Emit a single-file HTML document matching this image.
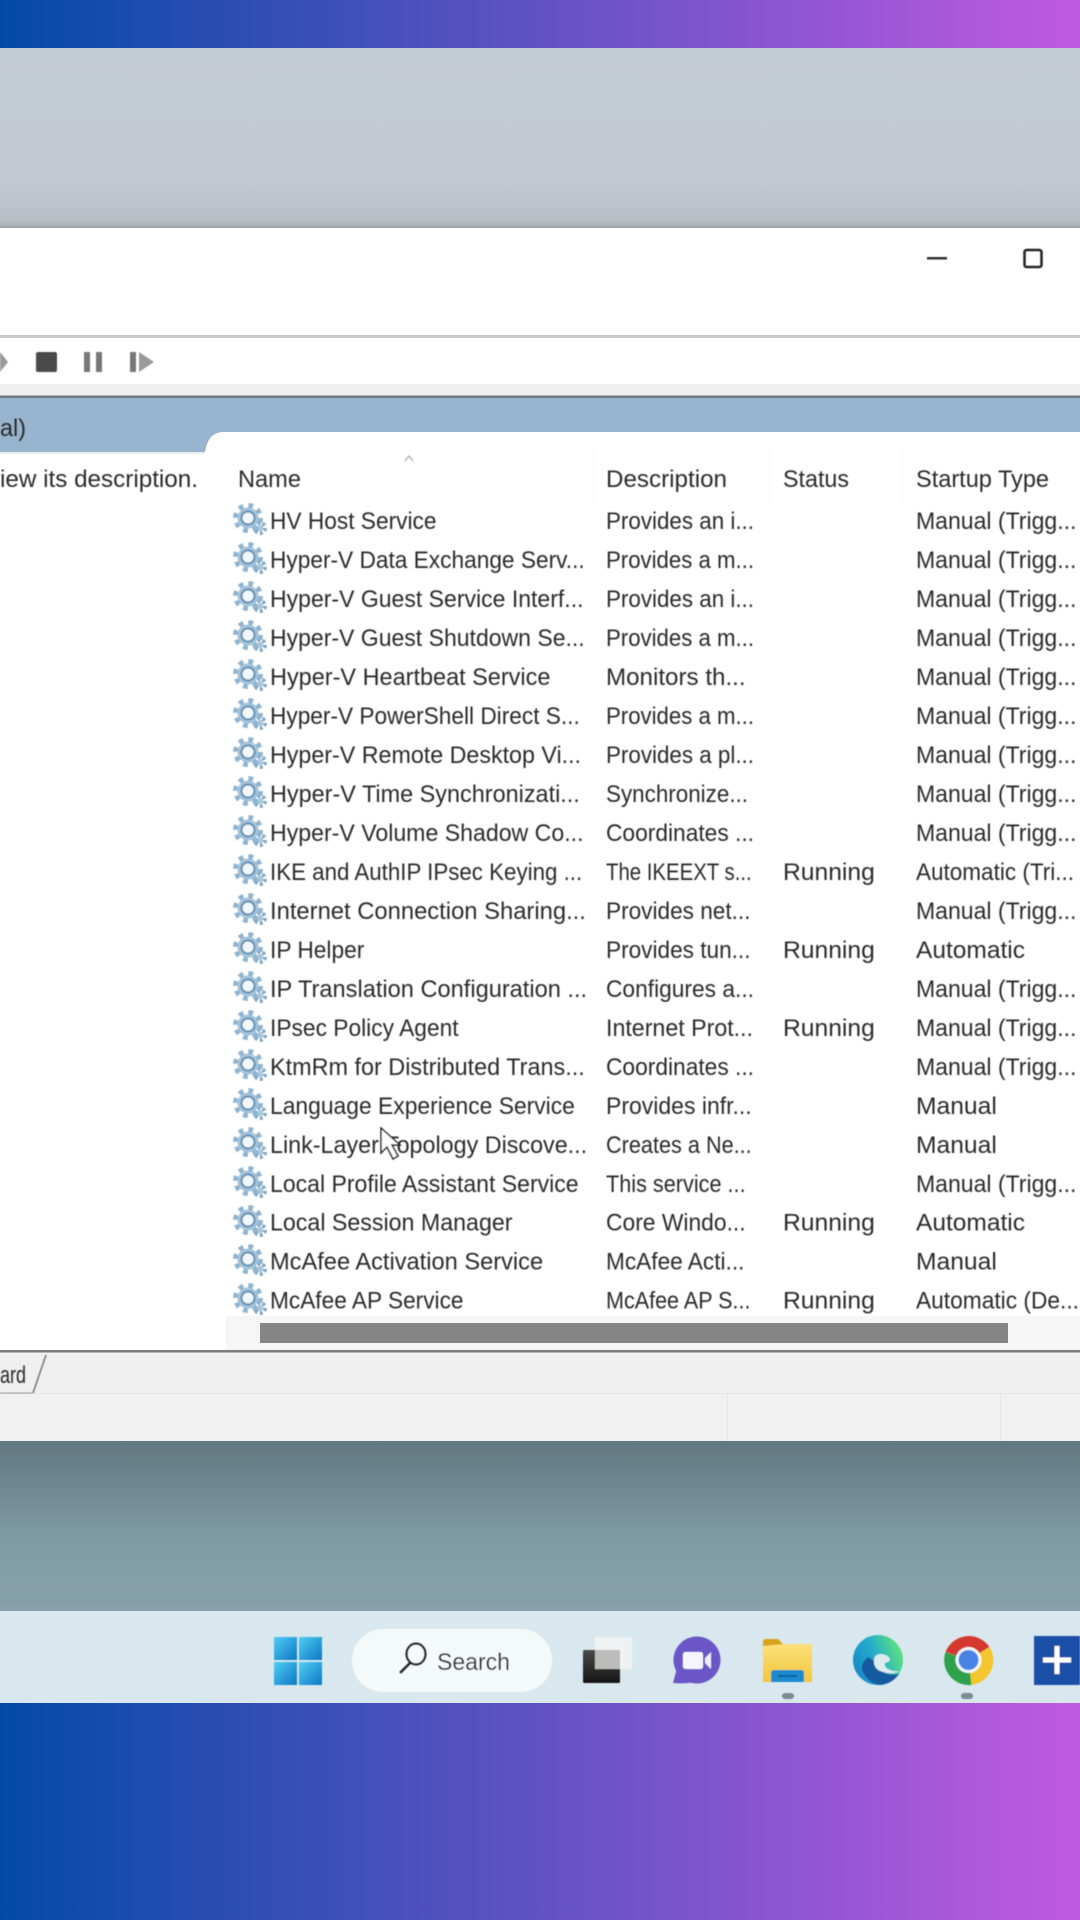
<!DOCTYPE html>
<html><head><meta charset="utf-8"><style>
html,body{margin:0;padding:0;width:1080px;height:1920px;overflow:hidden;background:#fff}
svg{display:block}
text{font-family:"Liberation Sans",sans-serif;font-size:24px;fill:#2c2c2c}
</style></head><body>
<svg width="1080" height="1920" viewBox="0 0 1080 1920" xmlns="http://www.w3.org/2000/svg">
<defs>
<linearGradient id="brand" x1="0" x2="1" y1="0" y2="0"><stop offset="0" stop-color="#034aa8"/><stop offset="1" stop-color="#c05ae0"/></linearGradient>
<linearGradient id="sky" x1="0" x2="0" y1="0" y2="1"><stop offset="0" stop-color="#c3cbd5"/><stop offset=".75" stop-color="#c1c8d2"/><stop offset=".95" stop-color="#b8bfc6"/><stop offset="1" stop-color="#abb2b5"/></linearGradient>
<linearGradient id="desk" x1="0" x2="0" y1="0" y2="1"><stop offset="0" stop-color="#617880"/><stop offset=".6" stop-color="#7f9ca6"/><stop offset="1" stop-color="#86a1ab"/></linearGradient>
<linearGradient id="win" x1="0" x2="1" y1="0" y2="1"><stop offset="0" stop-color="#4fcdf5"/><stop offset="1" stop-color="#0d78c4"/></linearGradient>
<linearGradient id="edge" x1="0" x2="1" y1=".7" y2=".3"><stop offset="0" stop-color="#1a86cc"/><stop offset=".5" stop-color="#25b0c8"/><stop offset="1" stop-color="#63e578"/></linearGradient>
<linearGradient id="task" x1="0" x2="0" y1="0" y2="1"><stop offset="0" stop-color="#4a4a4a"/><stop offset="1" stop-color="#151515"/></linearGradient>
<linearGradient id="fold" x1="0" x2="0" y1="0" y2="1"><stop offset="0" stop-color="#fbe07a"/><stop offset="1" stop-color="#f4c63e"/></linearGradient>
<filter id="b" x="-2%" y="-2%" width="104%" height="104%"><feGaussianBlur stdDeviation="0.6"/></filter>
<g id="gear">
<circle cx="27" cy="25" r="5" fill="none" stroke="#7ea6c6" stroke-width="4" stroke-dasharray="2.8 2.4"/>
<circle cx="27" cy="25" r="3" fill="#a9c6dc"/>
<circle cx="15" cy="15" r="12" fill="none" stroke="#8fb4d0" stroke-width="6" stroke-dasharray="4.6 4.82"/>
<circle cx="15" cy="15" r="10.500" fill="#a4c2d8"/>
<circle cx="15" cy="15" r="6.500" fill="#f2f7fb" stroke="#5f8fb4" stroke-width="2"/>
</g>
</defs>

<rect width="1080" height="1920" fill="#fff"/>
<rect y="0" width="1080" height="48" fill="url(#brand)"/>
<rect y="48" width="1080" height="180" fill="url(#sky)"/>
<rect y="226" width="1080" height="1.5" fill="#9ea4a6"/>

<rect y="228" width="1080" height="108" fill="#fff"/>
<rect y="335" width="1080" height="3" fill="#c9c9c9"/>
<rect y="338" width="1080" height="46" fill="#fff"/>
<rect y="384" width="1080" height="12" fill="#efefef"/>
<rect y="395.500" width="1080" height="2.500" fill="#74797e"/>

<path d="M0 398H1080V432H222Q208 433 205 452H0Z" fill="#98b4cf"/>
<rect y="452" width="205" height="2" fill="#e6eef5"/>

<rect x="226" y="1316" width="854" height="34" fill="#f6f6f6"/>
<rect x="260" y="1323" width="748" height="20" fill="#858585"/>
<rect y="1350" width="1080" height="2.500" fill="#7a7a7a"/>
<rect y="1352.500" width="1080" height="41" fill="#f0f0f0"/>
<rect y="1393" width="1080" height="1" fill="#e6e6e6"/>
<rect y="1394" width="1080" height="47" fill="#f1f1f1"/>
<rect x="727" y="1394" width="1" height="47" fill="#e6e6e6"/>
<rect x="1000" y="1394" width="1" height="47" fill="#e6e6e6"/>

<rect y="1441" width="1080" height="170" fill="url(#desk)"/>
<rect y="1611" width="1080" height="92" fill="#d9e8ee"/>
<rect y="1703" width="1080" height="217" fill="url(#brand)"/>

<g filter="url(#b)">
<rect x="927" y="257" width="20" height="2.500" fill="#333"/>
<rect x="1024.500" y="250" width="17" height="17" rx="2" fill="none" stroke="#222" stroke-width="2.500"/>

<path d="M0 352L8 362L0 372Z" fill="#9a9a9a"/>
<rect x="36" y="352" width="21" height="20" rx="2" fill="#484848"/>
<rect x="84" y="352" width="6" height="20" fill="#777"/>
<rect x="96" y="352" width="6" height="20" fill="#777"/>
<rect x="130" y="352" width="6" height="20" fill="#777"/>
<path d="M139 352L154 362L139 372Z" fill="#999"/>

<text x="0" y="436" textLength="26" lengthAdjust="spacingAndGlyphs">al)</text>
<text x="0" y="487" textLength="198" lengthAdjust="spacingAndGlyphs">iew its description.</text>

<text x="238" y="487" textLength="63" lengthAdjust="spacingAndGlyphs">Name</text>
<text x="606" y="487" textLength="121" lengthAdjust="spacingAndGlyphs">Description</text>
<text x="783" y="487" textLength="66" lengthAdjust="spacingAndGlyphs">Status</text>
<text x="916" y="487" textLength="133" lengthAdjust="spacingAndGlyphs">Startup Type</text>
<path d="M405 461L409 456L413 461" fill="none" stroke="#aaa" stroke-width="1.300"/>
<rect x="593" y="450" width="1" height="50" fill="#f6f6f6"/>
<rect x="769" y="450" width="1" height="50" fill="#f6f6f6"/>
<rect x="902" y="450" width="1" height="50" fill="#f6f6f6"/>

<use href="#gear" x="233" y="503"/><use href="#gear" x="233" y="542"/><use href="#gear" x="233" y="581"/><use href="#gear" x="233" y="620"/><use href="#gear" x="233" y="659"/><use href="#gear" x="233" y="698"/><use href="#gear" x="233" y="737"/><use href="#gear" x="233" y="776"/><use href="#gear" x="233" y="815"/><use href="#gear" x="233" y="854"/><use href="#gear" x="233" y="893"/><use href="#gear" x="233" y="932"/><use href="#gear" x="233" y="971"/><use href="#gear" x="233" y="1010"/><use href="#gear" x="233" y="1049"/><use href="#gear" x="233" y="1088"/><use href="#gear" x="233" y="1127"/><use href="#gear" x="233" y="1166"/><use href="#gear" x="233" y="1205"/><use href="#gear" x="233" y="1244"/><use href="#gear" x="233" y="1283"/>

<g>
<text x="270" y="529" textLength="166.500" lengthAdjust="spacingAndGlyphs">HV Host Service</text>
<text x="270" y="568" textLength="314.700" lengthAdjust="spacingAndGlyphs">Hyper-V Data Exchange Serv...</text>
<text x="270" y="607" textLength="313.500" lengthAdjust="spacingAndGlyphs">Hyper-V Guest Service Interf...</text>
<text x="270" y="646" textLength="314.700" lengthAdjust="spacingAndGlyphs">Hyper-V Guest Shutdown Se...</text>
<text x="270" y="685" textLength="280.400" lengthAdjust="spacingAndGlyphs">Hyper-V Heartbeat Service</text>
<text x="270" y="724" textLength="309.800" lengthAdjust="spacingAndGlyphs">Hyper-V PowerShell Direct S...</text>
<text x="270" y="763" textLength="311" lengthAdjust="spacingAndGlyphs">Hyper-V Remote Desktop Vi...</text>
<text x="270" y="802" textLength="309.800" lengthAdjust="spacingAndGlyphs">Hyper-V Time Synchronizati...</text>
<text x="270" y="841" textLength="313.500" lengthAdjust="spacingAndGlyphs">Hyper-V Volume Shadow Co...</text>
<text x="270" y="880" textLength="312.200" lengthAdjust="spacingAndGlyphs">IKE and AuthIP IPsec Keying ...</text>
<text x="270" y="919" textLength="315.900" lengthAdjust="spacingAndGlyphs">Internet Connection Sharing...</text>
<text x="270" y="958" textLength="94.300" lengthAdjust="spacingAndGlyphs">IP Helper</text>
<text x="270" y="997" textLength="317.100" lengthAdjust="spacingAndGlyphs">IP Translation Configuration ...</text>
<text x="270" y="1036" textLength="188.600" lengthAdjust="spacingAndGlyphs">IPsec Policy Agent</text>
<text x="270" y="1075" textLength="314.700" lengthAdjust="spacingAndGlyphs">KtmRm for Distributed Trans...</text>
<text x="270" y="1114" textLength="304.900" lengthAdjust="spacingAndGlyphs">Language Experience Service</text>
<text x="270" y="1153" textLength="317.100" lengthAdjust="spacingAndGlyphs">Link-Layer Topology Discove...</text>
<text x="270" y="1192" textLength="308.600" lengthAdjust="spacingAndGlyphs">Local Profile Assistant Service</text>
<text x="270" y="1230.500" textLength="242.500" lengthAdjust="spacingAndGlyphs">Local Session Manager</text>
<text x="270" y="1269.500" textLength="273.100" lengthAdjust="spacingAndGlyphs">McAfee Activation Service</text>
<text x="270" y="1308.500" textLength="193.500" lengthAdjust="spacingAndGlyphs">McAfee AP Service</text>

<text x="606" y="529" textLength="148" lengthAdjust="spacingAndGlyphs">Provides an i...</text>
<text x="606" y="568" textLength="148" lengthAdjust="spacingAndGlyphs">Provides a m...</text>
<text x="606" y="607" textLength="148" lengthAdjust="spacingAndGlyphs">Provides an i...</text>
<text x="606" y="646" textLength="148" lengthAdjust="spacingAndGlyphs">Provides a m...</text>
<text x="606" y="685" textLength="139.600" lengthAdjust="spacingAndGlyphs">Monitors th...</text>
<text x="606" y="724" textLength="148" lengthAdjust="spacingAndGlyphs">Provides a m...</text>
<text x="606" y="763" textLength="148" lengthAdjust="spacingAndGlyphs">Provides a pl...</text>
<text x="606" y="802" textLength="142" lengthAdjust="spacingAndGlyphs">Synchronize...</text>
<text x="606" y="841" textLength="148" lengthAdjust="spacingAndGlyphs">Coordinates ...</text>
<text x="606" y="880" textLength="145.700" lengthAdjust="spacingAndGlyphs">The IKEEXT s...</text>
<text x="606" y="919" textLength="144.500" lengthAdjust="spacingAndGlyphs">Provides net...</text>
<text x="606" y="958" textLength="144.500" lengthAdjust="spacingAndGlyphs">Provides tun...</text>
<text x="606" y="997" textLength="148" lengthAdjust="spacingAndGlyphs">Configures a...</text>
<text x="606" y="1036" textLength="147" lengthAdjust="spacingAndGlyphs">Internet Prot...</text>
<text x="606" y="1075" textLength="148" lengthAdjust="spacingAndGlyphs">Coordinates ...</text>
<text x="606" y="1114" textLength="145.700" lengthAdjust="spacingAndGlyphs">Provides infr...</text>
<text x="606" y="1153" textLength="145.700" lengthAdjust="spacingAndGlyphs">Creates a Ne...</text>
<text x="606" y="1192" textLength="139.600" lengthAdjust="spacingAndGlyphs">This service ...</text>
<text x="606" y="1230.500" textLength="139.600" lengthAdjust="spacingAndGlyphs">Core Windo...</text>
<text x="606" y="1269.500" textLength="138.400" lengthAdjust="spacingAndGlyphs">McAfee Acti...</text>
<text x="606" y="1308.500" textLength="144.500" lengthAdjust="spacingAndGlyphs">McAfee AP S...</text>

<text x="783" y="880" textLength="91.800" lengthAdjust="spacingAndGlyphs">Running</text>
<text x="783" y="958" textLength="91.800" lengthAdjust="spacingAndGlyphs">Running</text>
<text x="783" y="1036" textLength="91.800" lengthAdjust="spacingAndGlyphs">Running</text>
<text x="783" y="1230.500" textLength="91.800" lengthAdjust="spacingAndGlyphs">Running</text>
<text x="783" y="1308.500" textLength="91.800" lengthAdjust="spacingAndGlyphs">Running</text>

<text x="916" y="529" textLength="160.400" lengthAdjust="spacingAndGlyphs">Manual (Trigg...</text>
<text x="916" y="568" textLength="160.400" lengthAdjust="spacingAndGlyphs">Manual (Trigg...</text>
<text x="916" y="607" textLength="160.400" lengthAdjust="spacingAndGlyphs">Manual (Trigg...</text>
<text x="916" y="646" textLength="160.400" lengthAdjust="spacingAndGlyphs">Manual (Trigg...</text>
<text x="916" y="685" textLength="160.400" lengthAdjust="spacingAndGlyphs">Manual (Trigg...</text>
<text x="916" y="724" textLength="160.400" lengthAdjust="spacingAndGlyphs">Manual (Trigg...</text>
<text x="916" y="763" textLength="160.400" lengthAdjust="spacingAndGlyphs">Manual (Trigg...</text>
<text x="916" y="802" textLength="160.400" lengthAdjust="spacingAndGlyphs">Manual (Trigg...</text>
<text x="916" y="841" textLength="160.400" lengthAdjust="spacingAndGlyphs">Manual (Trigg...</text>
<text x="916" y="880" textLength="158" lengthAdjust="spacingAndGlyphs">Automatic (Tri...</text>
<text x="916" y="919" textLength="160.400" lengthAdjust="spacingAndGlyphs">Manual (Trigg...</text>
<text x="916" y="958" textLength="109" lengthAdjust="spacingAndGlyphs">Automatic</text>
<text x="916" y="997" textLength="160.400" lengthAdjust="spacingAndGlyphs">Manual (Trigg...</text>
<text x="916" y="1036" textLength="160.400" lengthAdjust="spacingAndGlyphs">Manual (Trigg...</text>
<text x="916" y="1075" textLength="160.400" lengthAdjust="spacingAndGlyphs">Manual (Trigg...</text>
<text x="916" y="1114" textLength="80.800" lengthAdjust="spacingAndGlyphs">Manual</text>
<text x="916" y="1153" textLength="80.800" lengthAdjust="spacingAndGlyphs">Manual</text>
<text x="916" y="1192" textLength="160.400" lengthAdjust="spacingAndGlyphs">Manual (Trigg...</text>
<text x="916" y="1230.500" textLength="109" lengthAdjust="spacingAndGlyphs">Automatic</text>
<text x="916" y="1269.500" textLength="80.800" lengthAdjust="spacingAndGlyphs">Manual</text>
<text x="916" y="1308.500" textLength="163" lengthAdjust="spacingAndGlyphs">Automatic (De...</text>
</g>

<path d="M381 1128L381 1153L387 1147L393 1159L398 1156L392 1145L400 1145Z" fill="#fff" stroke="#222" stroke-width="1.500"/>

<text x="0" y="1383" textLength="26" lengthAdjust="spacingAndGlyphs">ard</text>
<path d="M46 1355L33 1393" stroke="#777" stroke-width="1.500"/>
<path d="M0 1393H33" stroke="#999" stroke-width="1"/>

<rect x="274" y="1637" width="23" height="23" fill="url(#win)"/>
<rect x="299" y="1637" width="23" height="23" fill="url(#win)"/>
<rect x="274" y="1662" width="23" height="23" fill="url(#win)"/>
<rect x="299" y="1662" width="23" height="23" fill="url(#win)"/>

<rect x="352" y="1629" width="200" height="63" rx="31" fill="#f4f9fa"/>
<ellipse cx="416" cy="1654" rx="9.500" ry="10.500" fill="none" stroke="#222" stroke-width="2.500"/>
<path d="M410 1663L400 1673" stroke="#222" stroke-width="3"/>
<text x="437" y="1670" textLength="73" lengthAdjust="spacingAndGlyphs">Search</text>

<rect x="583" y="1650" width="37" height="33" rx="1.500" fill="url(#task)"/>
<rect x="595" y="1637" width="37" height="32" fill="#eff2f3"/>
<rect x="595" y="1650" width="25" height="19" fill="#bcbcba"/>

<circle cx="697" cy="1660" r="23.500" fill="#6a56c6"/>
<path d="M677 1668L673 1683Q686 1684 694 1682Z" fill="#6a56c6"/>
<rect x="683" y="1652" width="20" height="17" rx="2.500" fill="#f6f4fc"/>
<path d="M705 1658L711 1652V1669L705 1663Z" fill="#f0eefa"/>

<path d="M763 1642Q763 1639 766 1639H778L784 1645V1650H763Z" fill="#d9a21b"/>
<path d="M763 1646L784 1644H812V1682H763Z" fill="url(#fold)"/>
<path d="M771 1682V1673Q771 1670 774 1670H801Q804 1670 804 1673V1682Z" fill="#1d8ad0"/>
<rect x="778" y="1675" width="19" height="2" fill="#0d5f9c"/>

<g transform="translate(878,1660)">
<circle r="25" fill="url(#edge)"/>
<path d="M-10 -3Q-20 6 -14 14Q-8 24 2 25Q14 24 21 14Q12 16 5 12Q-4 9 -4 1Z" fill="#125aa0"/>
<path d="M3 -6Q-5 -6 -4 3Q-3 10 5 12Q14 15 22 11Q15 12 10 9Q6 7 7 3Q12 2 12 -1Q9 -6 3 -6Z" fill="#dcebf0"/>
</g>

<g transform="translate(968.500,1660)">
<path d="M0 0L-23 -8A25 25 0 0 1 21 -13Z" fill="#d5382f"/>
<path d="M0 0L21 -13A25 25 0 0 1 3 25Z" fill="#f3c62f"/>
<path d="M0 0L3 25A25 25 0 0 1 -23 -8Z" fill="#2fa24b"/>
<circle r="13" fill="#f3f6f8"/><circle r="10" fill="#4a84e4"/>
</g>

<rect x="1034" y="1636" width="46" height="49" fill="#1e4fa8"/>
<rect x="1043" y="1657.500" width="28" height="5" fill="#fff"/>
<rect x="1054.500" y="1646" width="5" height="28" fill="#fff"/>

<rect x="782" y="1693" width="12" height="6" rx="3" fill="#7b8b90"/>
<rect x="961" y="1693" width="12" height="6" rx="3" fill="#7b8b90"/>
</g>
</svg>
</body></html>
